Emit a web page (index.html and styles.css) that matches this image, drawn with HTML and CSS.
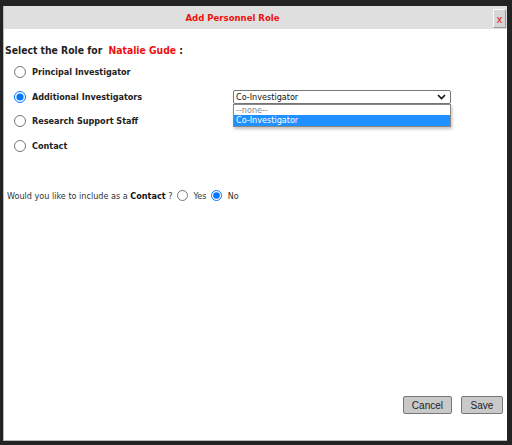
FILE: index.html
```html
<!doctype html>
<html>
<head>
    <meta charset="utf-8">
    <title>Add Personnel Role</title>
    <link rel="stylesheet" href="styles.css">
</head>
<body>
<div class="dialog">
    <div class="dialog-header">
        <span class="dialog-title">Add Personnel Role</span>
        <button class="dialog-close" type="button">x</button>
    </div>

    <div class="dialog-body">
        <p class="role-heading">Select the Role for <span class="person-name">Natalie Gude</span> :</p>

        <ul class="role-list">
            <li class="role-row">
                <label><input type="radio" name="role"> Principal Investigator</label>
            </li>
            <li class="role-row">
                <label><input type="radio" name="role" checked> Additional Investigators</label>
                <div class="role-select">
                    <div class="select-box">
                        <span>Co-Investigator</span>
                        <svg class="select-arrow" width="9" height="6" viewBox="0 0 9 6">
                            <path d="M1 1 L4.5 4.5 L8 1" fill="none" stroke="#111" stroke-width="1.6"/>
                        </svg>
                    </div>
                    <ul class="select-options">
                        <li class="option-none">--none--</li>
                        <li class="option-active">Co-Investigator</li>
                    </ul>
                </div>
            </li>
            <li class="role-row">
                <label><input type="radio" name="role"> Research Support Staff</label>
            </li>
            <li class="role-row">
                <label><input type="radio" name="role"> Contact</label>
            </li>
        </ul>

        <div class="contact-question">
            Would you like to include as a <b>Contact</b> ?
            <label><input type="radio" name="contact"> Yes</label>
            <label><input type="radio" name="contact" checked> No</label>
        </div>
    </div>

    <div class="dialog-footer">
        <button type="button" class="dialog-button">Cancel</button>
        <button type="button" class="dialog-button">Save</button>
    </div>
</div>
</body>
</html>
```

FILE: styles.css
```css
html, body {
    height: 100%;
}

body {
    margin: 0;
    padding: 6px 5px 4px 3px;
    box-sizing: border-box;
    background: #232323;
    font-family: "DejaVu Sans Condensed", "DejaVu Sans", sans-serif;
    color: #222;
}

/* dialog frame */
.dialog {
    height: 100%;
    background: #fff;
    display: flex;
    flex-direction: column;
    border-left: 1px solid #bbb;
    border-bottom: 1px solid #bbb;
    box-sizing: border-box;
}

.dialog-header {
    position: relative;
    height: 23px;
    padding-right: 46px;
    background: #dfdfdf;
    display: flex;
    align-items: center;
    justify-content: center;
}

.dialog-title {
    color: #ee1111;
    font-weight: bold;
    font-size: 9.5px;
}

.dialog-close {
    position: absolute;
    right: 1px;
    top: 3px;
    width: 13px;
    height: 19px;
    padding: 0;
    background: #d6d6d6;
    border: 1px solid;
    border-color: #fafafa #999 #999 #fafafa;
    color: #ee1111;
    font-family: "Liberation Sans", Arial, sans-serif;
    font-size: 11px;
}

.dialog-body {
    flex: 1;
    padding: 0 0 0 1px;
}

.role-heading {
    margin: 15px 0 4px;
    font-size: 10.3px;
    font-weight: bold;
}

.person-name {
    color: #ee1111;
    margin-left: 3px;
}

.role-list {
    list-style: none;
    margin: 0;
    padding: 0 0 0 5px;
}

.role-row {
    position: relative;
    height: 24.5px;
    display: flex;
    align-items: center;
    font-size: 9px;
    font-weight: bold;
}

.role-row input {
    margin: 0 6px 0 4px;
    width: 12px;
    height: 12px;
}

.role-row label {
    display: flex;
    align-items: center;
}

/* dropdown, shown open */
.role-select {
    position: absolute;
    left: 223px;
    top: 5px;
    width: 218px;
    font-family: "DejaVu Sans Condensed", "DejaVu Sans", sans-serif;
    font-weight: normal;
    font-size: 9px;
}

.select-box {
    height: 12px;
    border: 1px solid #777;
    border-radius: 2px;
    display: flex;
    align-items: center;
    justify-content: space-between;
    padding: 0 4px 0 2px;
    color: #111;
}

.select-options {
    list-style: none;
    margin: 0;
    padding: 0;
    border: 1px solid #888;
    background: #fff;
    box-shadow: 1px 2px 3px rgba(0, 0, 0, 0.25);
}

.select-options li {
    height: 10.5px;
    line-height: 10.5px;
    padding: 0 2px;
}

.option-none {
    color: #888;
}

.option-active {
    background: #1e90ff;
    color: #fff;
}

.contact-question {
    margin: 32px 0 0 2px;
    font-size: 9px;
    color: #333;
}

.contact-question b {
    color: #111;
}

.contact-question input {
    margin: 0 3px 0 2px;
    width: 11px;
    height: 11px;
    vertical-align: -2px;
}

.dialog-footer {
    display: flex;
    justify-content: flex-end;
    gap: 9px;
    padding: 0 4px 26px 0;
}

.dialog-button {
    height: 18px;
    padding: 0 8px;
    min-width: 42px;
    background: #c9c9c9;
    border: 1px solid #777;
    border-radius: 2px;
    font-family: "Liberation Sans", Arial, sans-serif;
    font-size: 10px;
    color: #222;
}
```
